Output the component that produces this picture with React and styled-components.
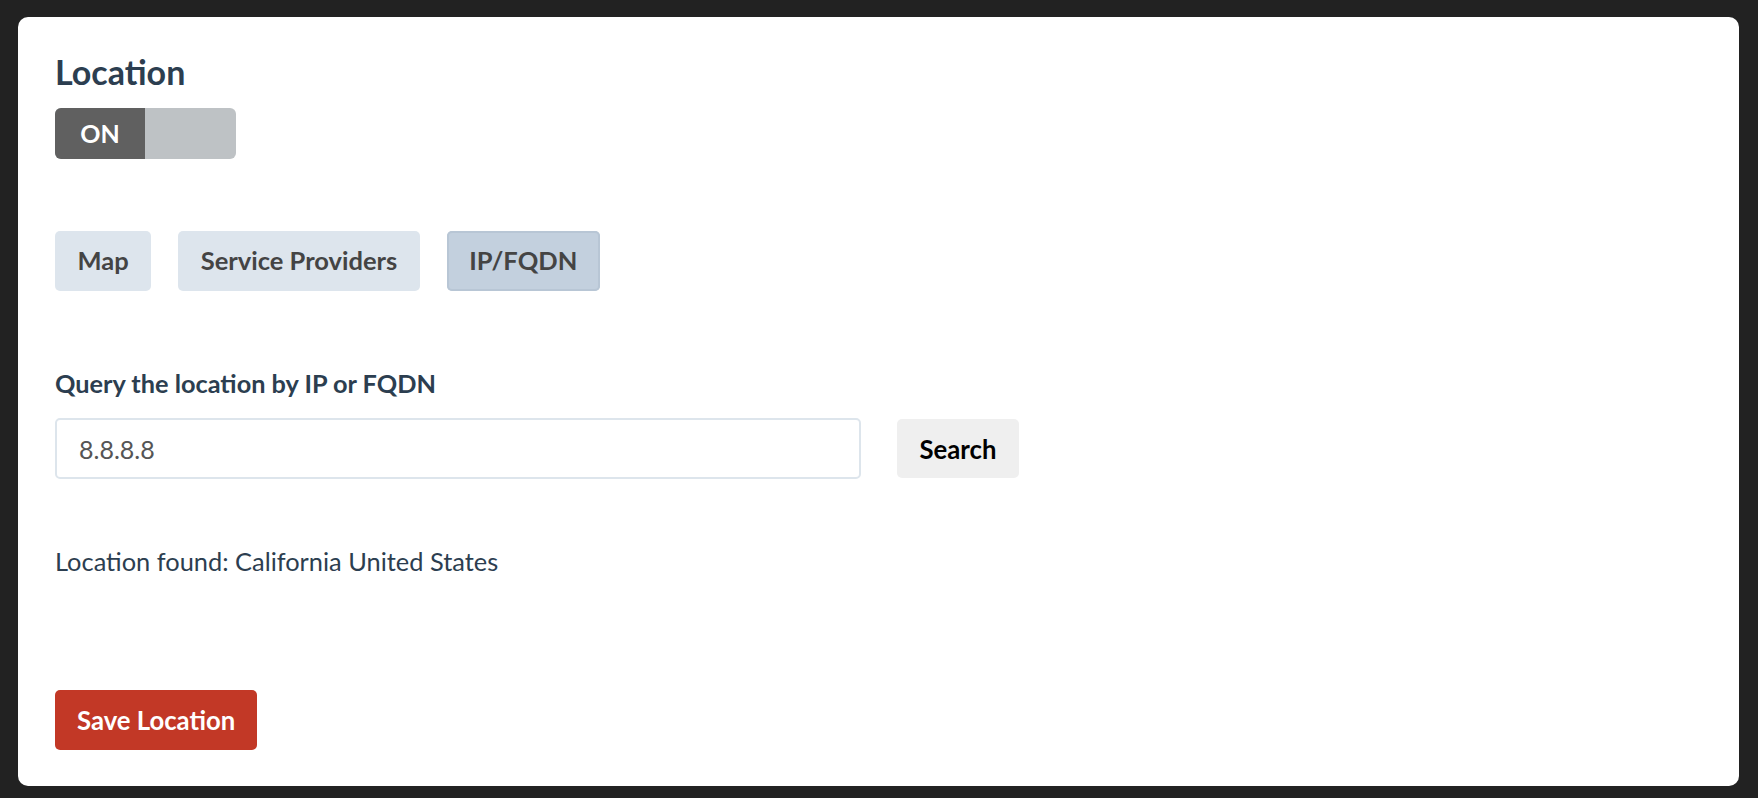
import React, { useState } from 'react';
import styled, { createGlobalStyle } from 'styled-components';

const GlobalStyle = createGlobalStyle`
  html, body {
    margin: 0;
    background: #222222;
  }
  body {
    padding: 17px 19px 13px 18px;
    font-family: Lato, "Open Sans", sans-serif;
  }
`;

const Card = styled.div`
  background: #ffffff;
  border-radius: 10px;
  padding: 35px 37px 36px;
  box-sizing: border-box;
  display: flex;
  flex-direction: column;
  align-items: flex-start;
`;

const Title = styled.h1`
  margin: 0;
  font-size: 34px;
  line-height: 1.2;
  font-weight: 700;
  color: #2c3e50;
`;

const Toggle = styled.div`
  margin-top: 15px;
  display: flex;
  width: 181px;
  height: 51px;
  border-radius: 6px;
  overflow: hidden;
  background: #bec2c5;
`;

const ToggleLabel = styled.div`
  width: 90px;
  background: #606060;
  color: #ffffff;
  font-size: 25px;
  font-weight: 700;
  display: flex;
  align-items: center;
  justify-content: center;
`;

const Tabs = styled.div`
  margin-top: 72px;
  display: flex;
  gap: 27px;
`;

const Tab = styled.button`
  font-family: inherit;
  font-size: 25.5px;
  line-height: 1.2;
  font-weight: 700;
  color: #444444;
  padding: 14.7px 22.5px;
  border: none;
  border-radius: 5px;
  background: ${p => (p.$active ? '#c3d0de' : '#dde5ed')};
  box-shadow: ${p => (p.$active ? 'inset 0 0 0 2px #b8c6d5' : 'none')};
  cursor: pointer;
`;

const Label = styled.label`
  margin-top: 77px;
  font-size: 25.3px;
  line-height: 1.2;
  font-weight: 700;
  color: #2c3e50;
`;

const QueryRow = styled.div`
  margin-top: 20px;
  display: flex;
  align-items: center;
  gap: 36px;
`;

const Input = styled.input`
  width: 806px;
  height: 61px;
  box-sizing: border-box;
  border: 2px solid #dde5ec;
  border-radius: 5px;
  padding: 0 22px;
  font-family: inherit;
  font-size: 25px;
  color: #555555;
  outline: none;
`;

const SearchButton = styled.button`
  height: 59px;
  padding: 0 22.5px;
  border: none;
  border-radius: 5px;
  background: #efefef;
  color: #000000;
  font-family: inherit;
  font-size: 25.7px;
  font-weight: 700;
  cursor: pointer;
`;

const Result = styled.p`
  margin: 67px 0 0;
  font-size: 25.4px;
  line-height: 1.2;
  color: #2c3e50;
`;

const SaveButton = styled.button`
  margin-top: 113px;
  height: 60px;
  padding: 0 22px;
  border: none;
  border-radius: 5px;
  background: #c23826;
  color: #ffffff;
  font-family: inherit;
  font-size: 25.7px;
  font-weight: 700;
  cursor: pointer;
`;

const tabs = ['Map', 'Service Providers', 'IP/FQDN'];

export default function App() {
  const [active, setActive] = useState('IP/FQDN');
  const [query, setQuery] = useState('8.8.8.8');

  return (
    <>
      <GlobalStyle />
      <Card>
        <Title>Location</Title>
        <Toggle>
          <ToggleLabel>ON</ToggleLabel>
        </Toggle>
        <Tabs>
          {tabs.map(t => (
            <Tab key={t} $active={t === active} onClick={() => setActive(t)}>
              {t}
            </Tab>
          ))}
        </Tabs>
        <Label htmlFor="query">Query the location by IP or FQDN</Label>
        <QueryRow>
          <Input id="query" value={query} onChange={e => setQuery(e.target.value)} />
          <SearchButton>Search</SearchButton>
        </QueryRow>
        <Result>Location found: California United States</Result>
        <SaveButton>Save Location</SaveButton>
      </Card>
    </>
  );
}
